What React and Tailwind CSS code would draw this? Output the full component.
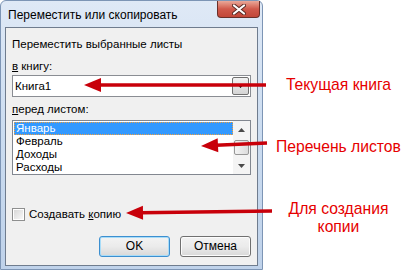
import React from "react";

function ScrollArrow({ down }) {
  return (
    <svg width="7" height="4" viewBox="0 0 7 4">
      <path d={down ? "M0 0 H7 L3.5 4 Z" : "M0 4 H7 L3.5 0 Z"} fill="#4a4a4a" />
    </svg>
  );
}

function Dialog() {
  const sheets = ["Январь", "Февраль", "Доходы", "Расходы"];
  return (
    <div className="w-[263px] h-[270px] shrink-0 flex flex-col rounded-t-[6px] border border-[#7d95b5] bg-gradient-to-b from-[#dfe9f6] via-[#cbdcf0] to-[#bfd2ea]">
      {/* title bar */}
      <div className="h-[26px] flex items-start justify-between pl-[7px] pr-[2px]">
        <span className="mt-[7px] text-[12px] leading-[15px] text-black">Переместить или скопировать</span>
        <div className="w-[43px] h-[17px] rounded-b-[4px] border border-t-0 border-[#6b2f28] bg-gradient-to-b from-[#e9a899] via-[#d0594b] to-[#c24738] flex items-center justify-center">
          <svg width="14" height="11" viewBox="0 0 14 11">
            <path d="M2 1.5 L12 9.5 M12 1.5 L2 9.5" stroke="#5a2a24" strokeWidth="4" strokeLinecap="round" />
            <path d="M2 1.5 L12 9.5 M12 1.5 L2 9.5" stroke="#ffffff" strokeWidth="2.2" strokeLinecap="round" />
          </svg>
        </div>
      </div>

      {/* client area */}
      <div className="mx-[4px] mb-[3px] flex-1 flex flex-col border border-[#6f7c8e] bg-[#f0f0f0] px-[6px] pt-[9px] text-[11.5px] leading-[15px] text-black">
        <div>Переместить выбранные листы</div>
        <div className="mt-[7px]">
          <span className="underline">в</span> книгу:
        </div>

        <div className="mt-[1px] h-[22px] flex items-stretch border border-[#8a8d93] bg-white">
          <div className="flex-1 pl-[2px] flex items-center">Книга1</div>
          <div className="w-[17px] my-[1px] mr-[1px] rounded-[2px] border border-[#707070] bg-gradient-to-b from-[#f2f2f2] to-[#d4d4d4] flex justify-center pt-[6px]">
            <svg width="7" height="4" viewBox="0 0 7 4">
              <path d="M0 0 H7 L3.5 4 Z" fill="#000" />
            </svg>
          </div>
        </div>

        <div className="mt-[5px]">
          <span className="underline">п</span>еред листом:
        </div>

        <div className="mt-[3px] h-[55px] flex border border-[#828790] bg-white overflow-hidden">
          <div className="flex-1 pt-[1px] pl-[1px]">
            {sheets.map((s, i) => (
              <div
                key={s}
                className={
                  i === 0
                    ? "h-[13px] px-[2px] leading-[12px] bg-[#3399ff] text-white outline outline-1 outline-dotted outline-[#f0a040] -outline-offset-1"
                    : "h-[13px] px-[2px] leading-[13px]"
                }
              >
                {s}
              </div>
            ))}
          </div>
          <div className="w-[17px] flex flex-col bg-[#f4f4f4]">
            <div className="h-[17px] flex items-center justify-center">
              <ScrollArrow />
            </div>
            <div className="mt-[2px] mx-[1px] h-[15px] rounded-[2px] border border-[#979797] bg-gradient-to-r from-[#f4f4f4] to-[#dcdcdc]" />
            <div className="flex-1" />
            <div className="h-[17px] flex items-center justify-center">
              <ScrollArrow down />
            </div>
          </div>
        </div>

        <div className="mt-[32px] h-[15px] flex items-center gap-[4px]">
          <div className="w-[13px] h-[13px] border border-[#8e8f8f] bg-white p-[1px]">
            <div className="w-full h-full bg-gradient-to-br from-[#d8d8d8] to-[#f8f8f8]" />
          </div>
          <span>
            Создавать <span className="underline">к</span>опию
          </span>
        </div>

        <div className="mt-[14px] flex justify-end gap-[10px]">
          <button className="w-[71px] h-[21px] rounded-[3px] border border-[#3c8fd0] bg-gradient-to-b from-[#f3f3f3] via-[#ebebeb] to-[#d8d8d8] shadow-[inset_0_0_0_1px_#a8dcf8] text-[12px] leading-[15px] text-black">
            OK
          </button>
          <button className="w-[71px] h-[21px] rounded-[3px] border border-[#707070] bg-gradient-to-b from-[#f2f2f2] via-[#ebebeb] to-[#d8d8d8] shadow-[inset_0_0_0_1px_#fcfcfc] text-[12px] leading-[15px] text-black">
            Отмена
          </button>
        </div>
      </div>
    </div>
  );
}

function Notes() {
  return (
    <div className="flex-1 flex flex-col items-center text-[15.7px] leading-[19px] text-[#e60000] pt-[75px]">
      <div>Текущая книга</div>
      <div className="mt-[43px]">Перечень листов</div>
      <div className="mt-[44px] text-center leading-[18px]">
        Для создания
        <br />
        копии
      </div>
    </div>
  );
}

function Arrows() {
  const arrows = [
    { tip: [84, 85], end: [266, 85] },
    { tip: [201, 146], end: [267, 143] },
    { tip: [126, 213], end: [272, 211] },
  ];
  return (
    <svg className="absolute inset-0 pointer-events-none" width="414" height="270" viewBox="0 0 414 270">
      {arrows.map(({ tip, end }, i) => {
        const [x1, y1] = tip;
        const [x2, y2] = end;
        const len = Math.hypot(x2 - x1, y2 - y1);
        const ux = (x2 - x1) / len;
        const uy = (y2 - y1) / len;
        const bx = x1 + ux * 17;
        const by = y1 + uy * 17;
        const hx = -uy * 7;
        const hy = ux * 7;
        return (
          <g key={i}>
            <line x1={bx - ux * 2} y1={by - uy * 2} x2={x2} y2={y2} stroke="#c8000a" strokeWidth="3.5" />
            <polygon points={`${x1},${y1} ${bx + hx},${by + hy} ${bx - hx},${by - hy}`} fill="#c8000a" />
          </g>
        );
      })}
    </svg>
  );
}

export default function App() {
  return (
    <div className="relative w-[414px] h-[270px] flex bg-white overflow-hidden font-['Liberation_Sans',Arial,sans-serif]">
      <Dialog />
      <Notes />
      <Arrows />
    </div>
  );
}
